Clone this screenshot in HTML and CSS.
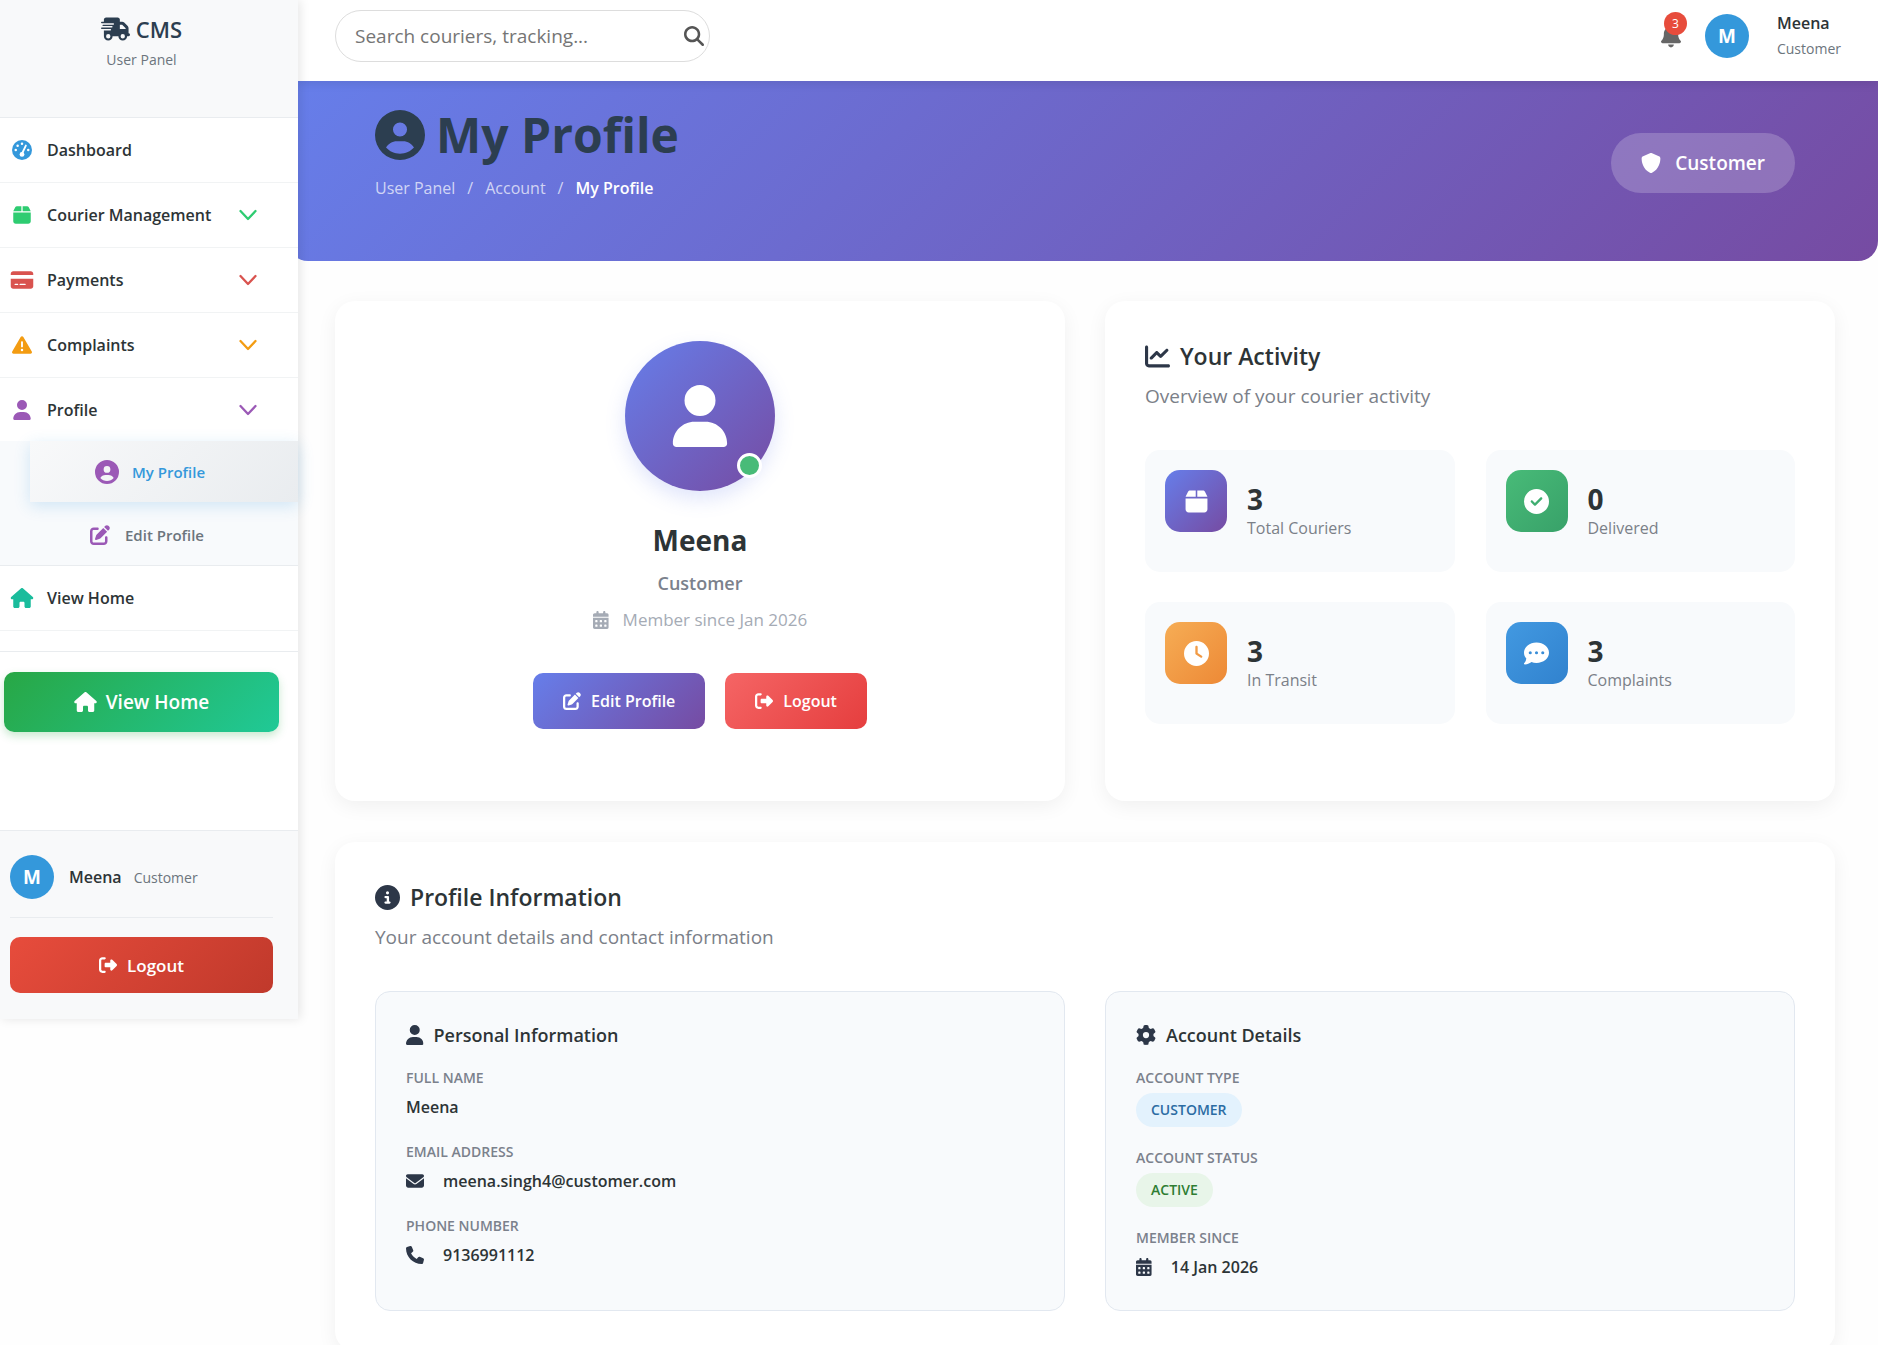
FILE: index.html
```html
<!DOCTYPE html>
<html lang="en">
<head>
    <meta charset="UTF-8">
    <meta name="viewport" content="width=device-width, initial-scale=1.0">
    <title>My Profile - CMS</title>
    <link rel="stylesheet" href="styles.css">
</head>
<body>
    <!-- Icon sprite -->
    <svg class="sprite" aria-hidden="true">
        <symbol id="i-truck" viewBox="0 0 640 512"><path d="M112 0C85.5 0 64 21.5 64 48V96H16c-8.8 0-16 7.2-16 16s7.2 16 16 16H272c8.8 0 16 7.2 16 16s-7.2 16-16 16H48c-8.8 0-16 7.2-16 16s7.2 16 16 16H240c8.8 0 16 7.2 16 16s-7.2 16-16 16H16c-8.8 0-16 7.2-16 16s7.2 16 16 16H208c8.8 0 16 7.2 16 16s-7.2 16-16 16H64V416c0 53 43 96 96 96s96-43 96-96H384c0 53 43 96 96 96s96-43 96-96h32c17.7 0 32-14.3 32-32s-14.3-32-32-32V237.3c0-17-6.7-33.3-18.7-45.3L512 114.7c-12-12-28.3-18.7-45.3-18.7H416V48c0-26.5-21.5-48-48-48H112zM544 237.3V256H416V160h50.7L544 237.3zM160 368a48 48 0 1 1 0 96 48 48 0 1 1 0-96zm272 48a48 48 0 1 1 96 0 48 48 0 1 1 -96 0z"/></symbol>
        <symbol id="i-gauge" viewBox="0 0 512 512">
            <circle cx="256" cy="256" r="256"/>
            <g fill="#fff"><circle cx="256" cy="96" r="32"/><circle cx="144" cy="144" r="32"/><circle cx="96" cy="256" r="32"/><circle cx="416" cy="256" r="32"/><circle cx="256" cy="368" r="62"/></g>
            <path d="M256 350L354 142" stroke="#fff" stroke-width="48" stroke-linecap="round"/>
        </symbol>
        <symbol id="i-box" viewBox="0 0 448 512"><path d="M50.7 58.5L0 160H208V32H93.7C75.5 32 58.9 42.3 50.7 58.5zM240 160H448L397.3 58.5C389.1 42.3 372.5 32 354.3 32H240V160zm208 32H0V416c0 35.3 28.7 64 64 64H384c35.3 0 64-28.7 64-64V192z"/></symbol>
        <symbol id="i-card" viewBox="0 0 576 512"><path d="M64 32C28.7 32 0 60.7 0 96v32H576V96c0-35.3-28.7-64-64-64H64zM576 224H0V416c0 35.3 28.7 64 64 64H512c35.3 0 64-28.7 64-64V224zM112 352h64c8.8 0 16 7.2 16 16s-7.2 16-16 16H112c-8.8 0-16-7.2-16-16s7.2-16 16-16zm112 16c0-8.8 7.2-16 16-16H368c8.8 0 16 7.2 16 16s-7.2 16-16 16H240c-8.8 0-16-7.2-16-16z"/></symbol>
        <symbol id="i-warning" viewBox="0 0 512 512"><path d="M256 32c14.2 0 27.3 7.5 34.5 19.8l216 368c7.3 12.4 7.3 27.7 .2 40.1S486.3 480 472 480H40c-14.3 0-27.6-7.7-34.7-20.1s-7-27.8 .2-40.1l216-368C228.7 39.5 241.8 32 256 32zm0 128c-13.3 0-24 10.7-24 24V296c0 13.3 10.7 24 24 24s24-10.7 24-24V184c0-13.3-10.7-24-24-24zm32 224a32 32 0 1 0 -64 0 32 32 0 1 0 64 0z"/></symbol>
        <symbol id="i-user" viewBox="0 0 448 512"><path d="M224 256A128 128 0 1 0 224 0a128 128 0 1 0 0 256zm-45.7 48C79.8 304 0 383.8 0 482.3C0 498.7 13.3 512 29.7 512H418.3c16.4 0 29.7-13.3 29.7-29.7C448 383.8 368.2 304 269.7 304H178.3z"/></symbol>
        <symbol id="i-user-circle" viewBox="0 0 512 512"><path d="M399 384.2C376.9 345.8 335.4 320 288 320H224c-47.4 0-88.9 25.8-111 64.2c35.2 39.2 86.2 63.8 143 63.8s107.8-24.7 143-63.8zM0 256a256 256 0 1 1 512 0A256 256 0 1 1 0 256zm256 16a72 72 0 1 0 0-144 72 72 0 1 0 0 144z"/></symbol>
        <symbol id="i-edit" viewBox="0 0 512 512"><path d="M471.6 21.7c-21.9-21.9-57.3-21.9-79.2 0L362.3 51.7l97.9 97.9 30.1-30.1c21.9-21.9 21.9-57.3 0-79.2L471.6 21.7zm-299.2 220c-6.1 6.1-10.8 13.6-13.5 21.9l-29.6 88.8c-2.9 8.6-.6 18.1 5.8 24.6s15.9 8.7 24.6 5.8l88.8-29.6c8.2-2.7 15.7-7.4 21.9-13.5L437.7 172.3 339.7 74.3 172.4 241.7zM96 64C43 64 0 107 0 160V416c0 53 43 96 96 96H352c53 0 96-43 96-96V320c0-17.7-14.3-32-32-32s-32 14.3-32 32v96c0 17.7-14.3 32-32 32H96c-17.7 0-32-14.3-32-32V160c0-17.7 14.3-32 32-32h96c17.7 0 32-14.3 32-32s-14.3-32-32-32H96z"/></symbol>
        <symbol id="i-home" viewBox="0 0 576 512"><path d="M575.8 255.5c0 18-15 32.1-32 32.1h-32l.7 160.2c0 2.7-.2 5.4-.5 8.1V472c0 22.1-17.9 40-40 40H392c-22.1 0-40-17.9-40-40V384c0-17.7-14.3-32-32-32H256c-17.7 0-32 14.3-32 32v88c0 22.1-17.9 40-40 40H104c-22.1 0-40-17.9-40-40V287.6H32c-18 0-32-14-32-32.1c0-9 3-17 10-24L266.4 8c7-7 15-8 22-8s15 2 21 7L564.8 231.5c8 7 12 15 11 24z"/></symbol>
        <symbol id="i-logout" viewBox="0 0 512 512"><path d="M377.9 105.9L500.7 228.7c7.2 7.2 11.3 17.1 11.3 27.3s-4.1 20.1-11.3 27.3L377.9 406.1c-6.4 6.4-15 9.9-24 9.9c-18.7 0-33.9-15.2-33.9-33.9V320H192c-17.7 0-32-14.3-32-32V224c0-17.7 14.3-32 32-32H320V129.9c0-18.7 15.2-33.9 33.9-33.9c9 0 17.6 3.6 24 9.9zM160 96H96c-17.7 0-32 14.3-32 32V384c0 17.7 14.3 32 32 32h64c17.7 0 32 14.3 32 32s-14.3 32-32 32H96c-53 0-96-43-96-96V128C0 75 43 32 96 32h64c17.7 0 32 14.3 32 32s-14.3 32-32 32z"/></symbol>
        <symbol id="i-bell" viewBox="0 0 448 512"><path d="M224 0c-17.7 0-32 14.3-32 32V51.2C119 66 64 130.6 64 208v18.8c0 47-17.3 92.4-48.5 127.6l-7.4 8.3c-8.4 9.4-10.4 22.9-5.3 34.4S19.4 416 32 416H416c12.6 0 24-7.4 29.2-18.9s3.1-25-5.3-34.4l-7.4-8.3C401.3 319.2 384 273.9 384 226.8V208c0-77.4-55-142-128-156.8V32c0-17.7-14.3-32-32-32zm45.3 493.3c12-12 18.7-28.3 18.7-45.3H160c0 17 6.7 33.3 18.7 45.3s28.3 18.7 45.3 18.7s33.3-6.7 45.3-18.7z"/></symbol>
        <symbol id="i-search" viewBox="0 0 512 512"><path d="M416 208c0 45.9-14.9 88.3-40 122.7L502.6 457.4c12.5 12.5 12.5 32.8 0 45.3s-32.8 12.5-45.3 0L330.7 376c-34.4 25.2-76.8 40-122.7 40C93.1 416 0 322.9 0 208S93.1 0 208 0S416 93.1 416 208zM208 352a144 144 0 1 0 0-288 144 144 0 1 0 0 288z"/></symbol>
        <symbol id="i-shield" viewBox="0 0 512 512"><path d="M256 0c4.6 0 9.2 1 13.4 2.9L457.7 82.8c22 9.3 38.4 31 38.3 57.2c-.5 99.2-41.3 280.7-213.6 363.2c-16.7 8-36.1 8-52.8 0C57.3 420.7 16.5 239.2 16 140c-.1-26.2 16.3-47.9 38.3-57.2L242.7 2.9C246.8 1 251.4 0 256 0z"/></symbol>
        <symbol id="i-check" viewBox="0 0 512 512"><path d="M256 512A256 256 0 1 0 256 0a256 256 0 1 0 0 512zM369 209L241 337c-9.4 9.4-24.6 9.4-33.9 0l-64-64c-9.4-9.4-9.4-24.6 0-33.9s24.6-9.4 33.9 0l47 47L335 175c9.4-9.4 24.6-9.4 33.9 0s9.4 24.6 0 33.9z"/></symbol>
        <symbol id="i-clock" viewBox="0 0 512 512"><path d="M256 0a256 256 0 1 1 0 512A256 256 0 1 1 256 0zM232 120V256c0 8 4 15.5 10.7 20l96 64c11 7.4 25.9 4.4 33.3-6.7s4.4-25.9-6.7-33.3L280 243.2V120c0-13.3-10.7-24-24-24s-24 10.7-24 24z"/></symbol>
        <symbol id="i-comment" viewBox="0 0 512 512"><path d="M256 448c141.4 0 256-93.1 256-208S397.4 32 256 32S0 125.1 0 240c0 45.1 17.7 86.8 47.7 120.9c-1.9 24.5-11.4 46.3-21.4 62.9c-5.5 9.2-11.1 16.6-15.2 21.6c-2.1 2.5-3.7 4.4-4.9 5.7l-1.6 1.7c-4.6 4.6-5.9 11.4-3.4 17.4c2.5 6 8.3 9.9 14.8 9.9c28.7 0 57.6-8.9 81.6-19.3c22.9-10 42.4-21.9 54.3-30.6c31.8 11.5 67 17.9 104.1 17.9zM128 208a32 32 0 1 1 0 64 32 32 0 1 1 0-64zm128 0a32 32 0 1 1 0 64 32 32 0 1 1 0-64zm96 32a32 32 0 1 1 64 0 32 32 0 1 1 -64 0z"/></symbol>
        <symbol id="i-chart" viewBox="0 0 512 512"><path d="M64 64c0-17.7-14.3-32-32-32S0 46.3 0 64V400c0 44.2 35.8 80 80 80H480c17.7 0 32-14.3 32-32s-14.3-32-32-32H80c-8.8 0-16-7.2-16-16V64zm406.6 86.6c12.5-12.5 12.5-32.8 0-45.3s-32.8-12.5-45.3 0L320 210.7l-57.4-57.4c-12.5-12.5-32.8-12.5-45.3 0l-112 112c-12.5 12.5-12.5 32.8 0 45.3s32.8 12.5 45.3 0L240 221.3l57.4 57.4c12.5 12.5 32.8 12.5 45.3 0l128-128z"/></symbol>
        <symbol id="i-info" viewBox="0 0 512 512"><path d="M256 512A256 256 0 1 0 256 0a256 256 0 1 0 0 512zM216 336h24V272H216c-13.3 0-24-10.7-24-24s10.7-24 24-24h48c13.3 0 24 10.7 24 24v88h8c13.3 0 24 10.7 24 24s-10.7 24-24 24H216c-13.3 0-24-10.7-24-24s10.7-24 24-24zm40-208a32 32 0 1 1 0 64 32 32 0 1 1 0-64z"/></symbol>
        <symbol id="i-mail" viewBox="0 0 512 512"><path d="M48 64C21.5 64 0 85.5 0 112c0 15.1 7.1 29.3 19.2 38.4L236.8 313.6c11.4 8.5 27 8.5 38.4 0L492.8 150.4c12.1-9.1 19.2-23.3 19.2-38.4c0-26.5-21.5-48-48-48H48zM0 176V384c0 35.3 28.7 64 64 64H448c35.3 0 64-28.7 64-64V176L294.4 339.2c-22.8 17.1-54 17.1-76.8 0L0 176z"/></symbol>
        <symbol id="i-phone" viewBox="0 0 512 512"><path d="M164.9 24.6c-7.7-18.6-28-28.5-47.4-23.2l-88 24C12.1 30.2 0 46 0 64C0 311.4 200.6 512 448 512c18 0 33.8-12.1 38.6-29.5l24-88c5.3-19.4-4.6-39.7-23.2-47.4l-96-40c-16.3-6.8-35.2-2.1-46.3 11.6L304.7 368C234.3 334.7 177.3 277.7 144 207.3L193.3 167c13.7-11.2 18.4-30 11.6-46.3l-40-96z"/></symbol>
        <symbol id="i-calendar" viewBox="0 0 448 512"><path d="M128 0c17.7 0 32 14.3 32 32V64H288V32c0-17.7 14.3-32 32-32s32 14.3 32 32V64h48c26.5 0 48 21.5 48 48v48H0V112C0 85.5 21.5 64 48 64H96V32c0-17.7 14.3-32 32-32zM0 192H448V464c0 26.5-21.5 48-48 48H48c-26.5 0-48-21.5-48-48V192zm64 80v32c0 8.8 7.2 16 16 16h32c8.8 0 16-7.2 16-16V272c0-8.8-7.2-16-16-16H80c-8.8 0-16 7.2-16 16zm128 0v32c0 8.8 7.2 16 16 16h32c8.8 0 16-7.2 16-16V272c0-8.8-7.2-16-16-16H208c-8.8 0-16 7.2-16 16zm144-16c-8.8 0-16 7.2-16 16v32c0 8.8 7.2 16 16 16h32c8.8 0 16-7.2 16-16V272c0-8.8-7.2-16-16-16H336zM64 400v32c0 8.8 7.2 16 16 16h32c8.8 0 16-7.2 16-16V400c0-8.8-7.2-16-16-16H80c-8.8 0-16 7.2-16 16zm144-16c-8.8 0-16 7.2-16 16v32c0 8.8 7.2 16 16 16h32c8.8 0 16-7.2 16-16V400c0-8.8-7.2-16-16-16H208zm112 16v32c0 8.8 7.2 16 16 16h32c8.8 0 16-7.2 16-16V400c0-8.8-7.2-16-16-16H336c-8.8 0-16 7.2-16 16z"/></symbol>
        <symbol id="i-gear" viewBox="0 0 512 512"><path d="M495.9 166.6c3.2 8.7 .5 18.4-6.4 24.6l-43.3 39.4c1.1 8.3 1.7 16.8 1.7 25.4s-.6 17.1-1.7 25.4l43.3 39.4c6.9 6.2 9.6 15.9 6.4 24.6c-4.4 11.9-9.7 23.3-15.8 34.3l-4.7 8.1c-6.6 11-14 21.4-22.1 31.2c-5.9 7.2-15.7 9.6-24.5 6.8l-55.7-17.7c-13.4 10.3-28.2 18.9-44 25.4l-12.5 57.1c-2 9.1-9 16.3-18.2 17.8c-13.8 2.3-28 3.5-42.5 3.5s-28.7-1.2-42.5-3.5c-9.2-1.5-16.2-8.7-18.2-17.8l-12.5-57.1c-15.8-6.5-30.6-15.1-44-25.4L83.1 425.9c-8.8 2.8-18.6 .3-24.5-6.8c-8.1-9.8-15.5-20.2-22.1-31.2l-4.7-8.1c-6.1-11-11.4-22.4-15.8-34.3c-3.2-8.7-.5-18.4 6.4-24.6l43.3-39.4C64.6 273.1 64 264.6 64 256s.6-17.1 1.7-25.4L22.4 191.2c-6.9-6.2-9.6-15.9-6.4-24.6c4.4-11.9 9.7-23.3 15.8-34.3l4.7-8.1c6.6-11 14-21.4 22.1-31.2c5.9-7.2 15.7-9.6 24.5-6.8l55.7 17.7c13.4-10.3 28.2-18.9 44-25.4l12.5-57.1c2-9.1 9-16.3 18.2-17.8C227.3 1.2 241.5 0 256 0s28.7 1.2 42.5 3.5c9.2 1.5 16.2 8.7 18.2 17.8l12.5 57.1c15.8 6.5 30.6 15.1 44 25.4l55.7-17.7c8.8-2.8 18.6-.3 24.5 6.8c8.1 9.8 15.5 20.2 22.1 31.2l4.7 8.1c6.1 11 11.4 22.4 15.8 34.3zM256 336a80 80 0 1 0 0-160 80 80 0 1 0 0 160z"/></symbol>
        <symbol id="i-chevron" viewBox="0 0 18 12"><path d="M1.5 2L9 10L16.5 2" fill="none" stroke="currentColor" stroke-width="2.3" stroke-linecap="round" stroke-linejoin="round"/></symbol>
    </svg>

    <div class="layout">
        <!-- Sidebar -->
        <aside class="sidebar">
            <div class="sidebar-header">
                <div class="brand"><svg class="icon"><use href="#i-truck"/></svg>CMS</div>
                <p class="brand-sub">User Panel</p>
            </div>

            <nav class="sidebar-nav">
                <a href="#" class="nav-link"><span class="nav-icon blue"><svg class="icon s20"><use href="#i-gauge"/></svg></span>Dashboard</a>
                <button type="button" class="nav-link"><span class="nav-icon green"><svg class="icon s20"><use href="#i-box"/></svg></span>Courier Management<svg class="chevron green"><use href="#i-chevron"/></svg></button>
                <button type="button" class="nav-link"><span class="nav-icon red"><svg class="icon s20"><use href="#i-card"/></svg></span>Payments<svg class="chevron red"><use href="#i-chevron"/></svg></button>
                <button type="button" class="nav-link"><span class="nav-icon orange"><svg class="icon s20"><use href="#i-warning"/></svg></span>Complaints<svg class="chevron orange"><use href="#i-chevron"/></svg></button>
                <button type="button" class="nav-link open"><span class="nav-icon purple"><svg class="icon s20"><use href="#i-user"/></svg></span>Profile<svg class="chevron purple"><use href="#i-chevron"/></svg></button>
                <div class="submenu">
                    <a href="#" class="sub-link active"><svg class="icon s24"><use href="#i-user-circle"/></svg>My Profile</a>
                    <a href="#" class="sub-link"><svg class="icon s20"><use href="#i-edit"/></svg>Edit Profile</a>
                </div>
                <a href="#" class="nav-link"><span class="nav-icon teal"><svg class="icon s20"><use href="#i-home"/></svg></span>View Home</a>
            </nav>

            <div class="sidebar-home">
                <a href="#" class="home-btn"><svg class="icon s20"><use href="#i-home"/></svg>View Home</a>
            </div>

            <div class="sidebar-footer">
                <div class="footer-user">
                    <span class="avatar">M</span>
                    <strong class="user-name">Meena</strong>
                    <span class="user-role">Customer</span>
                </div>
                <button type="button" class="footer-logout"><svg class="icon s18"><use href="#i-logout"/></svg>Logout</button>
            </div>
        </aside>

        <div class="main">
            <header class="topbar">
                <form class="search">
                    <input type="text" class="search-input" placeholder="Search couriers, tracking..." aria-label="Search couriers, tracking">
                    <button type="button" class="search-btn" aria-label="Search"><svg class="icon s20"><use href="#i-search"/></svg></button>
                </form>
                <div class="topbar-right">
                    <button type="button" class="bell" aria-label="Notifications"><svg class="icon"><use href="#i-bell"/></svg><span class="bell-count">3</span></button>
                    <span class="avatar">M</span>
                    <div class="topbar-user">
                        <strong class="user-name">Meena</strong>
                        <span class="user-role">Customer</span>
                    </div>
                </div>
            </header>

            <section class="banner">
                <div class="banner-text">
                    <h1><svg class="icon"><use href="#i-user-circle"/></svg>My Profile</h1>
                    <nav class="breadcrumb">
                        <a href="#">User Panel</a><span>/</span><a href="#">Account</a><span>/</span><b>My Profile</b>
                    </nav>
                </div>
                <div class="role-badge"><svg class="icon s20"><use href="#i-shield"/></svg>Customer</div>
            </section>

            <div class="content">
                <div class="row">
                    <section class="card profile-card">
                        <div class="profile-avatar">
                            <svg class="icon"><use href="#i-user"/></svg>
                            <span class="status-dot"></span>
                        </div>
                        <h2 class="profile-name">Meena</h2>
                        <p class="profile-role">Customer</p>
                        <p class="profile-since"><svg class="icon s18 narrow"><use href="#i-calendar"/></svg>Member since Jan 2026</p>
                        <div class="profile-actions">
                            <a href="#" class="btn btn-primary"><svg class="icon s18"><use href="#i-edit"/></svg>Edit Profile</a>
                            <a href="#" class="btn btn-danger"><svg class="icon s18"><use href="#i-logout"/></svg>Logout</a>
                        </div>
                    </section>

                    <section class="card">
                        <h3 class="card-title"><svg class="icon"><use href="#i-chart"/></svg>Your Activity</h3>
                        <p class="card-sub">Overview of your courier activity</p>
                        <div class="stats">
                            <div class="stat">
                                <span class="stat-icon purple-bg"><svg class="icon"><use href="#i-box"/></svg></span>
                                <div class="stat-text"><strong>3</strong><span>Total Couriers</span></div>
                            </div>
                            <div class="stat">
                                <span class="stat-icon green-bg"><svg class="icon"><use href="#i-check"/></svg></span>
                                <div class="stat-text"><strong>0</strong><span>Delivered</span></div>
                            </div>
                            <div class="stat">
                                <span class="stat-icon orange-bg"><svg class="icon"><use href="#i-clock"/></svg></span>
                                <div class="stat-text"><strong>3</strong><span>In Transit</span></div>
                            </div>
                            <div class="stat">
                                <span class="stat-icon blue-bg"><svg class="icon"><use href="#i-comment"/></svg></span>
                                <div class="stat-text"><strong>3</strong><span>Complaints</span></div>
                            </div>
                        </div>
                    </section>
                </div>

                <section class="card">
                    <h3 class="card-title"><svg class="icon"><use href="#i-info"/></svg>Profile Information</h3>
                    <p class="card-sub">Your account details and contact information</p>
                    <div class="row">
                        <div class="info-box">
                            <h4><svg class="icon s20 narrow"><use href="#i-user"/></svg>Personal Information</h4>
                            <dl>
                                <dt>Full Name</dt>
                                <dd>Meena</dd>
                                <dt>Email Address</dt>
                                <dd><svg class="icon s18"><use href="#i-mail"/></svg>meena.singh4@customer.com</dd>
                                <dt>Phone Number</dt>
                                <dd><svg class="icon s18"><use href="#i-phone"/></svg>9136991112</dd>
                            </dl>
                        </div>
                        <div class="info-box">
                            <h4><svg class="icon s20"><use href="#i-gear"/></svg>Account Details</h4>
                            <dl>
                                <dt>Account Type</dt>
                                <dd><span class="pill pill-blue">Customer</span></dd>
                                <dt>Account Status</dt>
                                <dd><span class="pill pill-green">Active</span></dd>
                                <dt>Member Since</dt>
                                <dd><svg class="icon s18 narrow"><use href="#i-calendar"/></svg>14 Jan 2026</dd>
                            </dl>
                        </div>
                    </div>
                </section>
            </div>
        </div>
    </div>
</body>
</html>
```
FILE: styles.css
```css
:root {
    --dark: #2c3e50;
    --ink: #2d3748;
    --muted: #7b818c;
    --soft: #f8fafc;
    --line: #e9ecef;
    --blue: #3498db;
    --violet: linear-gradient(135deg, #667eea 0%, #764ba2 100%);
}

* {
    box-sizing: border-box;
}

html {
    scrollbar-width: none;
}

body {
    margin: 0;
    background: #fefefe;
    color: #2d3436;
    font-family: 'Segoe UI', 'Open Sans', 'Noto Sans', sans-serif;
    font-size: 16px;
}

h1, h2, h3, h4, p, dl, dd {
    margin: 0;
}

a {
    color: inherit;
    text-decoration: none;
}

button {
    border: none;
    background: none;
    padding: 0;
    color: inherit;
    font: inherit;
    cursor: pointer;
}

/* Icons */
.sprite {
    display: none;
}

.icon {
    height: 24px;
    width: auto;
    aspect-ratio: 1;
    fill: currentColor;
    flex-shrink: 0;
}

.s18 { height: 18px; }
.s20 { height: 20px; }
.s24 { height: 24px; }
.narrow { aspect-ratio: 7 / 8; }

.blue { color: var(--blue); }
.green { color: #2ecc71; }
.red { color: #d9534f; }
.orange { color: #f39c12; }
.purple { color: #9b59b6; }
.teal { color: #1abc9c; }

.layout {
    display: flex;
    align-items: flex-start;
}

/* Sidebar */
.sidebar {
    position: relative;
    z-index: 2;
    width: 298px;
    flex-shrink: 0;
    background: #fff;
    box-shadow: 2px 0 10px rgba(0, 0, 0, 0.1);
}

.sidebar-header {
    height: 118px;
    padding-top: 12px;
    padding-right: 15px;
    background: #f8f9fa;
    border-bottom: 1px solid var(--line);
    text-align: center;
}

.brand {
    display: flex;
    justify-content: center;
    align-items: center;
    gap: 6px;
    line-height: 34px;
    font-size: 22px;
    font-weight: 600;
    color: var(--dark);
}

.brand .icon {
    width: 29px;
    aspect-ratio: auto;
}

.brand-sub {
    line-height: 28px;
    font-size: 14px;
    color: #6c757d;
}

.nav-link {
    display: flex;
    align-items: center;
    width: 100%;
    height: 65px;
    padding: 0 41px 0 9px;
    border-bottom: 1px solid #f1f3f4;
    font-weight: 600;
    text-align: left;
}

.nav-link.open {
    height: 63px;
    border-bottom: none;
}

.nav-icon {
    display: flex;
    justify-content: center;
    width: 26px;
    margin-right: 12px;
}

.nav-icon .icon {
    width: 24px;
    aspect-ratio: auto;
}

.chevron {
    width: 18px;
    height: 12px;
    margin-left: auto;
}

.submenu {
    display: flex;
    flex-direction: column;
    gap: 2px;
    background: var(--soft);
    border-bottom: 1px solid var(--line);
}

.sub-link {
    display: flex;
    align-items: center;
    gap: 15px;
    height: 61px;
    padding-left: 90px;
    font-size: 15px;
    font-weight: 600;
    color: #6c757d;
}

.sub-link .icon {
    color: #9b59b6;
}

.sub-link.active {
    gap: 13px;
    margin-left: 30px;
    padding-left: 65px;
    background: linear-gradient(135deg, #f8f9fa, #e9ecef);
    color: var(--blue);
    box-shadow: 0 4px 15px rgba(52, 152, 219, 0.2);
}

.sidebar-home {
    margin-top: 20px;
    padding: 20px 19px 98px 4px;
    border-top: 1px solid var(--line);
}

.home-btn {
    display: flex;
    justify-content: center;
    align-items: center;
    gap: 9px;
    height: 60px;
    border-radius: 10px;
    background: linear-gradient(135deg, #28a745, #20c997);
    box-shadow: 0 4px 8px rgba(40, 167, 69, 0.25);
    color: #fff;
    font-size: 19px;
    font-weight: 600;
}

.home-btn .icon {
    width: 23px;
    aspect-ratio: auto;
}

.sidebar-footer {
    padding: 24px 25px 26px 10px;
    background: #f8f9fa;
    border-top: 1px solid var(--line);
}

.footer-user {
    display: flex;
    align-items: center;
    padding-bottom: 18px;
    border-bottom: 1px solid var(--line);
}

.footer-user .user-name {
    margin: 0 12px 0 15px;
}

.avatar {
    display: flex;
    justify-content: center;
    align-items: center;
    width: 44px;
    height: 44px;
    border-radius: 50%;
    background: var(--blue);
    color: #fff;
    font-size: 19px;
    font-weight: 700;
}

.user-name {
    font-weight: 600;
}

.user-role {
    font-size: 14px;
    color: #6c757d;
}

.footer-logout {
    display: flex;
    justify-content: center;
    align-items: center;
    gap: 10px;
    width: 100%;
    height: 56px;
    margin-top: 19px;
    border-radius: 10px;
    background: linear-gradient(135deg, #e74c3c, #c0392b);
    color: #fff;
    font-size: 17px;
    font-weight: 600;
}

/* Top bar */
.main {
    flex: 1;
    min-width: 0;
}

.topbar {
    position: relative;
    z-index: 1;
    display: flex;
    justify-content: space-between;
    align-items: center;
    padding: 10px 37px 19px;
    background: #fff;
    box-shadow: 0 2px 10px rgba(0, 0, 0, 0.1);
}

.search {
    display: flex;
    align-items: center;
    width: 375px;
    height: 52px;
    padding: 0 5px 0 19px;
    border: 1px solid #ddd;
    border-radius: 26px;
}

.search-input {
    flex: 1;
    min-width: 0;
    border: none;
    outline: none;
    padding: 0;
    background: none;
    font: inherit;
    font-size: 19px;
}

.search-input::placeholder {
    color: #757575;
}

.search-btn {
    display: flex;
    color: #555;
}

.topbar-right {
    display: flex;
    align-items: center;
}

.bell {
    position: relative;
    display: flex;
    margin-right: 24px;
    color: #666;
}

.bell .icon {
    width: 20px;
    aspect-ratio: auto;
}

.bell-count {
    position: absolute;
    top: -12px;
    right: -6px;
    width: 23px;
    height: 23px;
    border-radius: 50%;
    background: #e74c3c;
    color: #fff;
    font-size: 12px;
    line-height: 23px;
    text-align: center;
}

.topbar-user {
    display: flex;
    flex-direction: column;
    margin-left: 28px;
    line-height: 26px;
}

/* Banner */
.banner {
    display: flex;
    justify-content: space-between;
    min-height: 180px;
    margin-left: -10px;
    padding: 24px 83px 41px 87px;
    border-radius: 0 0 20px 20px;
    background: var(--violet);
}

.banner h1 {
    display: flex;
    align-items: center;
    gap: 11px;
    margin-bottom: 11px;
    font-size: 48px;
    line-height: 60px;
    font-weight: 700;
    color: var(--dark);
}

.banner h1 .icon {
    height: 50px;
}

.breadcrumb {
    display: flex;
    gap: 12px;
    font-size: 16px;
    line-height: 24px;
    color: rgba(255, 255, 255, 0.7);
}

.breadcrumb b {
    color: #fff;
    font-weight: 600;
}

.role-badge {
    display: flex;
    align-items: center;
    align-self: center;
    gap: 14px;
    height: 60px;
    padding: 0 30px;
    border-radius: 30px;
    background: rgba(255, 255, 255, 0.2);
    color: #fff;
    font-size: 19px;
    font-weight: 600;
}

/* Cards */
.content {
    display: flex;
    flex-direction: column;
    gap: 41px;
    padding: 40px 43px 40px 37px;
}

.row {
    display: flex;
    gap: 40px;
}

.row > * {
    flex: 1;
    min-width: 0;
}

.card {
    padding: 40px;
    border-radius: 20px;
    background: #fff;
    box-shadow: 0 5px 20px rgba(0, 0, 0, 0.06);
}

.profile-card {
    display: flex;
    flex-direction: column;
    align-items: center;
    padding-bottom: 72px;
}

.profile-avatar {
    position: relative;
    display: flex;
    justify-content: center;
    align-items: center;
    width: 150px;
    height: 150px;
    margin-bottom: 30px;
    border-radius: 50%;
    background: var(--violet);
    box-shadow: 0 8px 20px rgba(102, 126, 234, 0.2);
    color: #fff;
}

.profile-avatar .icon {
    height: 62px;
}

.status-dot {
    position: absolute;
    right: 13px;
    bottom: 13px;
    width: 25px;
    height: 25px;
    border: 3px solid #fff;
    border-radius: 50%;
    background: #48bb78;
}

.profile-name {
    font-size: 28px;
    line-height: 38px;
    color: #2d3436;
}

.profile-role {
    margin: 11px 0;
    font-size: 18px;
    line-height: 26px;
    font-weight: 600;
    color: var(--muted);
}

.profile-since {
    display: flex;
    align-items: center;
    gap: 14px;
    margin-bottom: 40px;
    font-size: 17px;
    line-height: 26px;
    color: #a5abb5;
}

.profile-actions {
    display: flex;
    gap: 20px;
}

.btn {
    display: flex;
    align-items: center;
    gap: 10px;
    height: 56px;
    padding: 0 30px;
    border-radius: 10px;
    color: #fff;
    font-weight: 600;
}

.btn-primary {
    background: var(--violet);
}

.btn-danger {
    background: linear-gradient(135deg, #f56565, #e53e3e);
}

.card-title {
    display: flex;
    align-items: center;
    gap: 10px;
    font-size: 23px;
    line-height: 30px;
    font-weight: 600;
    color: #2d3436;
}

.card-title .icon {
    height: 25px;
    color: var(--ink);
}

.card-sub {
    margin: 12px 0 41px;
    font-size: 19px;
    line-height: 26px;
    color: #7b8088;
}

.stats {
    display: grid;
    grid-template-columns: 1fr 1fr;
    gap: 30px 31px;
}

.stat {
    display: flex;
    gap: 20px;
    padding: 20px 20px 31px;
    border-radius: 15px;
    background: var(--soft);
}

.stat-icon {
    display: flex;
    justify-content: center;
    align-items: center;
    width: 62px;
    height: 62px;
    border-radius: 15px;
    color: #fff;
}

.stat-icon .icon {
    height: 25px;
}

.purple-bg { background: var(--violet); }
.green-bg { background: linear-gradient(135deg, #48bb78, #38a169); }
.orange-bg { background: linear-gradient(135deg, #f6ad55, #ed8936); }
.blue-bg { background: linear-gradient(135deg, #4299e1, #3182ce); }

.stat-text {
    display: flex;
    flex-direction: column;
    padding-top: 13px;
    line-height: 26px;
    color: #7b8088;
}

.stat-text strong {
    font-size: 28px;
    line-height: 32px;
    color: #2d3436;
}

/* Profile information */
.info-box {
    padding: 30px 30px 9px;
    border: 1px solid #e2e8f0;
    border-radius: 15px;
    background: var(--soft);
}

.info-box h4 {
    display: flex;
    align-items: center;
    gap: 10px;
    margin-bottom: 19px;
    font-size: 18px;
    line-height: 26px;
    font-weight: 600;
}

.info-box dt {
    margin-bottom: 4px;
    font-size: 14px;
    line-height: 22px;
    font-weight: 600;
    text-transform: uppercase;
    color: var(--muted);
}

.info-box dd {
    display: flex;
    align-items: center;
    gap: 19px;
    margin-bottom: 20px;
    line-height: 28px;
    font-weight: 600;
}

.info-box .icon {
    color: var(--ink);
}

.pill {
    padding: 0 15px;
    border-radius: 17px;
    font-size: 14px;
    line-height: 34px;
    text-transform: uppercase;
}

.pill-blue {
    background: #e3f2fd;
    color: #2b6ca3;
}

.pill-green {
    background: #e8f5e9;
    color: #2e7d32;
}
```
